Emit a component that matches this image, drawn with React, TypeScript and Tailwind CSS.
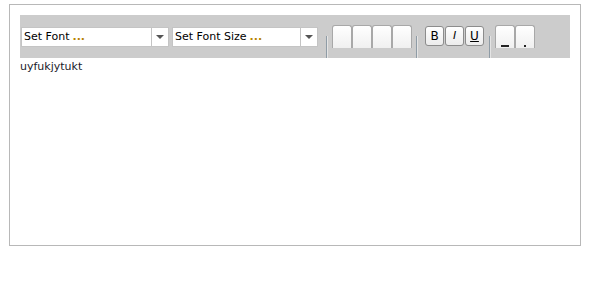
const font = { fontFamily: '"DejaVu Sans", Verdana, sans-serif' };

function FontSelect({ label, width }: { label: string; width: string }) {
  return (
    <div className={`flex h-[20px] mt-[12px] bg-white border border-[#c4c4c4] ${width}`}>
      <div className="flex-1 flex items-center pl-[2px] text-[11px] text-black whitespace-nowrap overflow-hidden">
        {label} <span className="ml-[3px] text-[#b88400] font-semibold">...</span>
      </div>
      <div className="w-[17px] border-l border-[#c4c4c4] flex items-center justify-center">
        <div className="w-0 h-0 border-l-[4px] border-r-[4px] border-t-[4px] border-l-transparent border-r-transparent border-t-[#555]" />
      </div>
    </div>
  );
}

function Sep({ ml }: { ml: string }) {
  return (
    <div className={`flex self-end h-[22px] ${ml}`}>
      <div className="w-[1px] bg-[#8f9ca6]" />
      <div className="w-[1px] bg-[#e4e4e4]" />
    </div>
  );
}

function TabButton({ children }: { children?: React.ReactNode }) {
  return (
    <div className="w-[20px] h-[23px] mt-[10px] rounded-t-[3px] border border-b-0 border-[#a8a8a8] bg-gradient-to-b from-white to-[#f0f0f0] flex items-end justify-center">
      {children}
    </div>
  );
}

function FmtButton({ children }: { children: React.ReactNode }) {
  return (
    <div className="w-[19px] h-[20px] mt-[11px] rounded-[3px] border border-[#8c8c8c] bg-gradient-to-b from-white to-[#ececec] flex items-center justify-center text-[12px] text-black">
      {children}
    </div>
  );
}

export default function App() {
  return (
    <div className="w-[597px] h-[288px] bg-white pt-[4px] pl-[9px]" style={font}>
      <div className="w-[572px] h-[242px] border border-[#b8b8b8] pt-[10px] pl-[10px]">
        <div className="w-[550px] h-[43px] bg-[#cccccc] flex items-start pl-[1px]">
          <FontSelect label="Set Font" width="w-[148px]" />
          <div className="ml-[3px]">
            <FontSelect label="Set Font Size" width="w-[146px]" />
          </div>
          <Sep ml="ml-[8px]" />
          <div className="flex ml-[4px]">
            <TabButton />
            <TabButton />
            <TabButton />
            <TabButton />
          </div>
          <Sep ml="ml-[4px]" />
          <div className="flex gap-[1px] ml-[7px]">
            <FmtButton>B</FmtButton>
            <FmtButton>
              <span className="italic text-[11px]">I</span>
            </FmtButton>
            <FmtButton>
              <span className="underline">U</span>
            </FmtButton>
          </div>
          <Sep ml="ml-[5px]" />
          <div className="flex ml-[4px]">
            <TabButton>
              <div className="w-[8px] h-[2px] bg-[#222] mb-[1px]" />
            </TabButton>
            <TabButton>
              <div className="w-[2px] h-[2px] bg-[#222] mb-[1px]" />
            </TabButton>
          </div>
        </div>
        <div className="text-[11px] leading-[16px] text-[#1a1a2a] pt-[1px]">uyfukjytukt</div>
      </div>
    </div>
  );
}
